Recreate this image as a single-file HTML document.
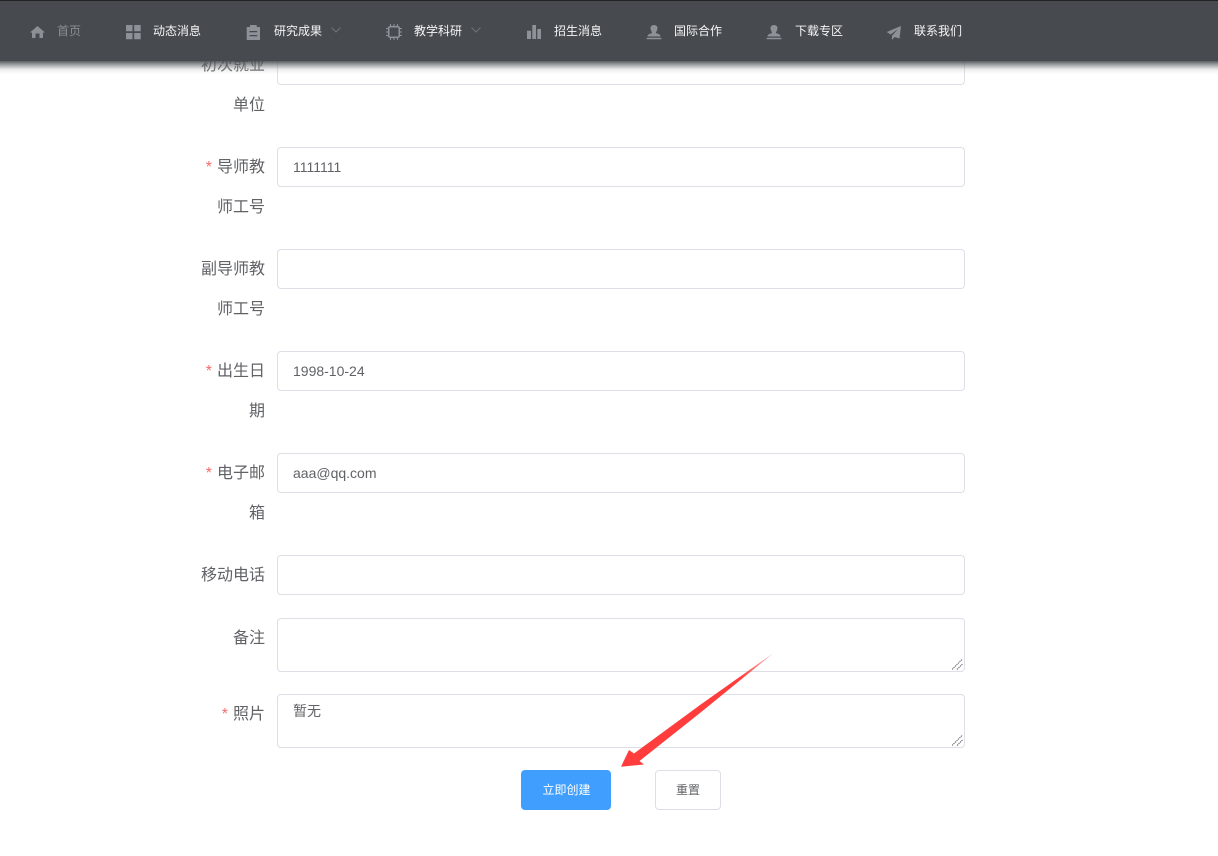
<!DOCTYPE html>
<html lang="zh"><head><meta charset="utf-8"><title>表单</title>
<style>
html,body{margin:0;padding:0;background:#fff;width:1218px;height:856px;overflow:hidden}
body{position:relative;font-family:"Liberation Sans","Noto Sans CJK SC",sans-serif;color:#606266}
.box{position:absolute;left:277px;width:686px;border:1px solid #dcdfe6;border-radius:4px;background:#fff;box-sizing:content-box}
.i{height:38px;line-height:38px;font-size:14px;color:#606266;text-indent:15px}
.t{height:52px;font-size:14px;line-height:20px;color:#606266}
.l{position:absolute;right:953px;font-size:16px;line-height:40px;height:40px;white-space:nowrap;color:#606266}
.l b{font-weight:400;color:#f56c6c;font-size:16px;margin-right:5px}
.grip{position:absolute;right:1px;bottom:1px}
.btn{position:absolute;top:770px;height:38px;line-height:38px;border-radius:4px;text-align:center;font-size:12px;border:1px solid #dcdfe6}
#nav{position:absolute;left:0;top:0;width:1218px;height:61px;background:#474b4f;border-top:1px solid #222;box-sizing:border-box}
#sh{position:absolute;left:0;top:61px;width:1218px;height:13px;background:linear-gradient(to bottom,rgba(71,75,79,.9),rgba(100,103,106,.6) 30%,rgba(180,180,180,.25) 65%,rgba(255,255,255,0))}
.n{position:absolute;top:23px;font-size:12px;line-height:16px;color:#f4f5f6;white-space:nowrap}
.ic{position:absolute;top:23px;width:16px;height:16px;overflow:visible}
</style></head><body>
<div class="box i" style="top:45px"></div>
<div class="l" style="top:46px">初次就业</div>
<div class="l" style="top:86px">单位</div>

<div class="box i" style="top:147px">1111111</div>
<div class="l" style="top:148px"><b>*</b>导师教</div>
<div class="l" style="top:188px">师工号</div>

<div class="box i" style="top:249px"></div>
<div class="l" style="top:250px">副导师教</div>
<div class="l" style="top:290px">师工号</div>

<div class="box i" style="top:351px">1998-10-24</div>
<div class="l" style="top:352px"><b>*</b>出生日</div>
<div class="l" style="top:392px">期</div>

<div class="box i" style="top:453px">aaa@qq.com</div>
<div class="l" style="top:454px"><b>*</b>电子邮</div>
<div class="l" style="top:494px">箱</div>

<div class="box i" style="top:555px"></div>
<div class="l" style="top:556px">移动电话</div>

<div class="box t" style="top:618px"><svg class="grip" width="11" height="11" viewBox="0 0 11 11"><path d="M0 10.500 10.500 0M5 10.500 10.500 5" stroke="#666" stroke-width="1" stroke-dasharray="1.400 .7" fill="none"/></svg></div>
<div class="l" style="top:619px">备注</div>

<div class="box t" style="top:694px"><span style="position:absolute;left:15px;top:6px">暂无</span><svg class="grip" width="11" height="11" viewBox="0 0 11 11"><path d="M0 10.500 10.500 0M5 10.500 10.500 5" stroke="#666" stroke-width="1" stroke-dasharray="1.400 .7" fill="none"/></svg></div>
<div class="l" style="top:695px"><b>*</b>照片</div>

<div class="btn" style="left:521px;width:88px;background:#409eff;border-color:#409eff;color:#fff;text-indent:1px">立即创建</div>
<div class="btn" style="left:655px;width:64px;background:#fff;color:#606266">重置</div>

<svg style="position:absolute;left:615px;top:650px" width="165" height="125" viewBox="0 0 165 125"><defs><linearGradient id="a" gradientUnits="userSpaceOnUse" x1="158" y1="3" x2="125" y2="28"><stop offset="0" stop-color="#ff3d3d" stop-opacity=".35"/><stop offset="1" stop-color="#ff3d3d"/></linearGradient></defs><path d="M158.500 3 85 55 19 103.500 14 100 6 116.700 29 114.500 24.500 111 85 63Z" fill="url(#a)"/></svg>

<div id="sh"></div>
<div id="nav"></div>

<svg class="ic" style="left:29px" viewBox="0 0 16 16"><path d="M8.500 3 1 9.500H3V15H6.500V10.500H10.500V15H14V9.500H16Z" fill="#8b9097"/></svg>
<div class="n" style="left:57px;color:#8b8e91">首页</div>

<svg class="ic" style="left:125px" viewBox="0 0 16 16"><path d="M1 2h6.500v6.300H1zM9.200 2h6.500v6.300H9.200zM1 10h6.500v6.300H1zM9.200 10h6.500v6.300H9.200z" fill="#8d9198"/></svg>
<div class="n" style="left:153px">动态消息</div>

<svg class="ic" style="left:246px" viewBox="0 0 16 16"><path fill-rule="evenodd" d="M.7 4H4V2H10.700V4H14V17H.7ZM3.500 8V9.300H11.200V8ZM3.500 12V13.300H11.200V12Z" fill="#8d9198"/></svg>
<div class="n" style="left:274px">研究成果</div>
<svg style="position:absolute;left:330px;top:26px" width="12" height="8" viewBox="0 0 12 8"><path d="M1.500 1.500 6 6 10.500 1.500" fill="none" stroke="#6f7479" stroke-width="1"/></svg>

<svg class="ic" style="left:386px;top:24px" viewBox="0 0 16 16"><rect x="2.700" y="2.700" width="10.600" height="10.600" rx="1.500" fill="none" stroke="#8d9198" stroke-width="1.600"/><path d="M4.500 0v2M8 0v2M11.500 0v2M4.500 14v2M8 14v2M11.500 14v2M0 4.500h2M0 8h2M0 11.500h2M14 4.500h2M14 8h2M14 11.500h2" stroke="#8d9198" stroke-width="1"/></svg>
<div class="n" style="left:414px">教学科研</div>
<svg style="position:absolute;left:470px;top:26px" width="12" height="8" viewBox="0 0 12 8"><path d="M1.500 1.500 6 6 10.500 1.500" fill="none" stroke="#6f7479" stroke-width="1"/></svg>

<svg class="ic" style="left:526px" viewBox="0 0 16 16"><path d="M1 7.700h4V16H1zM6.300 2h3.700v14H6.300zM11.300 6H15v10h-3.700z" fill="#8d9198"/></svg>
<div class="n" style="left:554px">招生消息</div>

<svg class="ic" style="left:646px" viewBox="0 0 16 16"><path d="M8 2C5.600 2 4.500 3.600 4.500 5.300 4.500 7.500 6 8.500 6 10 6 10.500 1.500 10.500 1.500 13.500H14.500C14.500 10.500 10 10.500 10 10 10 8.500 11.500 7.500 11.500 5.300 11.500 3.600 10.400 2 8 2ZM.7 14.700H15.300V16.200H.7Z" fill="#8d9198"/></svg>
<div class="n" style="left:674px">国际合作</div>

<svg class="ic" style="left:766px" viewBox="0 0 16 16"><path d="M8 2C5.600 2 4.500 3.600 4.500 5.300 4.500 7.500 6 8.500 6 10 6 10.500 1.500 10.500 1.500 13.500H14.500C14.500 10.500 10 10.500 10 10 10 8.500 11.500 7.500 11.500 5.300 11.500 3.600 10.400 2 8 2ZM.7 14.700H15.300V16.200H.7Z" fill="#8d9198"/></svg>
<div class="n" style="left:795px">下载专区</div>

<svg class="ic" style="left:886px;top:24px" viewBox="0 0 16 16"><path d="M15 2 .7 8 4.700 10.500 12 5 6 11.700V16L8.500 13 13.500 14.500Z" fill="#8d9198"/></svg>
<div class="n" style="left:914px">联系我们</div>
</body></html>
